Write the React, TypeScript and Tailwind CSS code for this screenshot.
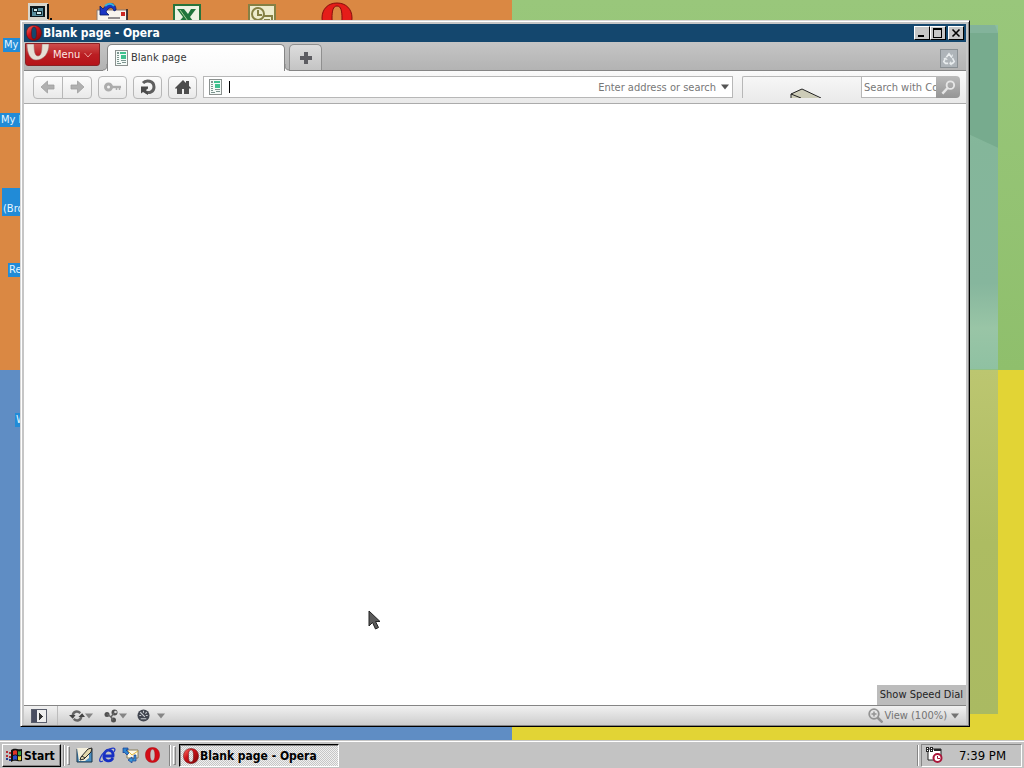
import type { ReactNode } from "react";

const ui = "font-['DejaVu_Sans_Condensed','DejaVu_Sans',sans-serif]";

function OperaIcon({ className }: { className: string }) {
  return (
    <svg viewBox="0 0 32 32" className={className} aria-hidden="true">
      <defs>
        <linearGradient id="operaRed" x1="0" y1="0" x2="1" y2="1">
          <stop offset="0" stopColor="#ff7a6c" />
          <stop offset="0.4" stopColor="#cf1219" />
          <stop offset="1" stopColor="#7a0508" />
        </linearGradient>
      </defs>
      <path
        fillRule="evenodd"
        fill="url(#operaRed)"
        stroke="#5e0a0c"
        strokeWidth="1"
        d="M16 1C7 1 1 7 1 16s6 15 15 15 15-6 15-15S25 1 16 1Zm0 3c4 0 5 5 5 12s-1 12-5 12-5-5-5-12 1-12 5-12Z"
      />
    </svg>
  );
}

function FlatOpera({ className }: { className: string }) {
  return (
    <svg viewBox="0 0 16 16" className={className} aria-hidden="true">
      <path fillRule="evenodd" fill="#d40d18" stroke="#a00810" strokeWidth=".5" d="M8 0C3 0 .5 3.500 .5 8S3 16 8 16s7.500-3.500 7.500-8S13 0 8 0Zm0 1.800c2 0 2.600 2.700 2.600 6.200S10 14.200 8 14.200 5.400 11.500 5.400 8 6 1.800 8 1.800Z" />
    </svg>
  );
}

function PageIcon() {
  return (
    <svg viewBox="0 0 13 16" className="h-4 w-[13px] shrink-0" shapeRendering="crispEdges" aria-hidden="true">
      <rect x=".5" y=".5" width="12" height="15" fill="#f4faf7" stroke="#8b918f" />
      <path fill="#3fc08f" d="M5 2h6v2H5zM6 5h5v4H6z" />
      <path fill="#7d9590" d="M2 2h2v2H2zM2 5h2v1H2zM2 7h2v1H2zM2 9h2v1H2zM6 10h5v1H6zM2 11h2v1H2zM2 13h4v1H2zM7 12h4v1H7z" />
    </svg>
  );
}

function Caret({ className = "" }: { className?: string }) {
  return (
    <svg viewBox="0 0 8 6" className={`h-[6px] w-2 ${className}`} aria-hidden="true">
      <path d="M0 .5h8L4 5.500Z" fill="currentColor" />
    </svg>
  );
}

function WindowButton({ label, children }: { label: string; children: ReactNode }) {
  return (
    <button
      aria-label={label}
      className="flex h-[14px] w-4 items-center justify-center border border-t-white border-r-black border-b-black border-l-white bg-[#c6c6c6] text-black"
    >
      <svg viewBox="0 0 12 10" className="h-[10px] w-3 shrink-0" shapeRendering="crispEdges" fill="none" stroke="currentColor" aria-hidden="true">
        {children}
      </svg>
    </button>
  );
}

function ToolButton({ label, className = "", children }: { label: string; className?: string; children: ReactNode }) {
  return (
    <button
      aria-label={label}
      className={`flex h-[23px] items-center justify-center border border-[#b7b7b7] bg-linear-to-b from-[#fcfcfc] to-[#e9e9e9] ${className}`}
    >
      {children}
    </button>
  );
}

function ArrowIcon({ flip = false }: { flip?: boolean }) {
  return (
    <svg viewBox="0 0 16 14" className={`h-[14px] w-4 ${flip ? "rotate-180" : ""}`} aria-hidden="true">
      <path d="M1 7 7.500 1v4H14v4H7.500v4Z" fill="#b0b0b0" stroke="#a0a0a0" strokeWidth=".8" />
    </svg>
  );
}

function Label({ text, className }: { text: string; className: string }) {
  return (
    <span className={`absolute flex w-16 items-end bg-[#218bd7] px-px text-[11px] leading-[14px] text-[#e6f6ff] ${className}`}>
      {text}
    </span>
  );
}

function Desktop() {
  return (
    <>
      <div className="grid h-full grid-cols-2 grid-rows-2" aria-hidden="true">
        <div className="bg-[#da8843]" />
        <div className="bg-linear-to-b from-[#99c77b] to-[#8fbf6c]" />
        <div className="bg-[#5f8dc4]" />
        <div className="bg-[#e2d435]" />
      </div>
      <div className="absolute top-[25px] right-[26px] bottom-[26px] flex w-10 flex-col" aria-hidden="true">
        <svg viewBox="0 0 40 345" preserveAspectRatio="none" className="w-full flex-1">
          <defs>
            <linearGradient id="glass" x1="0" y1="0" x2="0" y2="1">
              <stop offset="0" stopColor="#8cbf9f" />
              <stop offset="0.35" stopColor="#84b69a" />
              <stop offset="0.75" stopColor="#86b69d" />
              <stop offset="0.88" stopColor="#99c5a6" />
              <stop offset="1" stopColor="#8fc1a2" />
            </linearGradient>
          </defs>
          <path d="M0 0h40v345H0Z" fill="url(#glass)" />
          <path d="M0 8h40v115L12 110H0Z" fill="#77ab8e" />
          <path d="M0 0h37l3 8H0Z" fill="#83b39b" />
        </svg>
        <div className="flex-1 bg-linear-to-b from-[#bcc670] via-[#adbc62] to-[#aaba62]" />
      </div>
      <Label text="My" className="top-[38px] left-[3px]" />
      <Label text="My I" className="top-[113px] left-0" />
      <Label text="(Bro" className="top-[188px] left-[2px] h-7" />
      <Label text="Re" className="top-[263px] left-2" />
      <Label text="W" className="top-[413px] left-[15px]" />

      <svg viewBox="0 0 32 32" className="absolute top-0 left-[22px] size-8" shapeRendering="crispEdges" aria-hidden="true">
        <path d="M6 3h20v18H6z" fill="#d8d6cc" />
        <path d="M25 4h2v15h-2zM28 18h2v2h-2z" fill="#111" />
        <path d="M8 6h15v11H8z" fill="#0c171c" />
        <path d="M10 8h11v8H10z" fill="#598f9e" />
        <path d="M11 8h5v4h-5zM14 11h6v4h-6z" fill="#10242b" />
        <path d="M12 9h3v2h-3zM15 12h4v2h-4z" fill="#d7f0f0" />
      </svg>
      <svg viewBox="0 0 32 32" className="absolute top-0 left-24 size-8" aria-hidden="true">
        <path d="M1 10h30v14H1z" fill="#f8f5ee" stroke="#8b7a70" />
        <path d="M31 9v15" stroke="#1c1820" strokeWidth="1.500" />
        <path d="M25 12h4v4h-4z" fill="#cb2823" />
        <path d="M12 18h12" stroke="#2c2830" />
        <path d="M4 6v9h9l-3-3c2-5 7-6 8-1l2-1c0-8-8-9-13-1Z" fill="#1a35c4" stroke="#091d65" strokeWidth=".8" />
        <path d="M9 6c3-3 7-3 9 0" stroke="#37b2da" fill="none" strokeWidth="2" />
      </svg>
      <svg viewBox="0 0 32 32" className="absolute top-1 left-[171px] size-8" aria-hidden="true">
        <path d="M3 1h26v24H3z" fill="#edf3e3" stroke="#28743b" strokeWidth="2" />
        <path d="M6 5h7l4 5 3-5h5l-6 8 6 8h-7l-4-5-4 5H5l7-8Z" fill="#1f743b" />
        <path d="m9 6 10 14" stroke="#a7d091" />
      </svg>
      <svg viewBox="0 0 32 32" className="absolute top-1 left-[246px] size-8" fill="none" stroke="#858044" strokeWidth="2" aria-hidden="true">
        <path d="M3 1h26v24H3z" fill="#eeeccd" />
        <circle cx="12" cy="10" r="6" />
        <path d="M12 6v5h4M18 12h8v7h-3v-3h-5" />
      </svg>
      <svg viewBox="0 0 32 32" className="absolute top-[2px] left-[321px] size-8" aria-hidden="true">
        <path fillRule="evenodd" fill="#e51d19" stroke="#850d0c" d="M16 1C7 1 1 7 1 16s6 15 15 15 15-6 15-15S25 1 16 1Zm0 3c4 0 5 5 5 12s-1 12-5 12-5-5-5-12 1-12 5-12Z" />
      </svg>
    </>
  );
}

function TitleBar() {
  return (
    <header className="flex h-[18px] shrink-0 items-center bg-[#14476e] pr-[2px] pl-[2px]">
      <OperaIcon className="size-4 shrink-0" />
      <h1 className="ml-px flex-1 pt-px text-[12px] leading-[17px] font-bold text-white">Blank page - Opera</h1>
      <div className="flex">
        <WindowButton label="Minimize">
          <path d="M2 8h6" strokeWidth="2" />
        </WindowButton>
        <WindowButton label="Maximize">
          <path d="M1 1h9" strokeWidth="2" />
          <path d="M1.500 1v8.500h8V1" />
        </WindowButton>
        <span className="w-[2px]" />
        <WindowButton label="Close">
          <path d="m2.500 1.500 7 7m0-7-7 7" strokeWidth="1.600" shapeRendering="auto" />
        </WindowButton>
      </div>
    </header>
  );
}

function TabFlare({ flip = false }: { flip?: boolean }) {
  return (
    <svg viewBox="0 0 4 27" className={`mt-[2px] -mb-px h-[27px] w-1 shrink-0 ${flip ? "-scale-x-100" : ""}`} aria-hidden="true">
      <path d="M4 20c0 4-1 6-4 6v1h4Z" fill="#fafafa" />
      <path d="M4 20c0 4-1 6-4 6" fill="none" stroke="#858585" />
    </svg>
  );
}

function TabBar() {
  return (
    <div className="flex h-[29px] shrink-0 items-start border-b border-[#858585] bg-linear-to-b from-[#c5c5c5] to-[#b3b3b3]">
      <button className="mt-px ml-px flex h-[23px] w-[75px] shrink-0 items-center overflow-hidden rounded-b-[3px] border border-[#8a2023] bg-linear-to-b from-[#cf4c4c] via-[#bb1e23] to-[#b51319] text-[11px] text-[#ffe9e5]">
        <svg viewBox="0 0 25 22" className="h-[22px] w-[25px] shrink-0" aria-hidden="true">
          <path d="M1 0c0 9 3 16 9 16 8 0 13-7 13-16h-7c0 8-1 12-4 12S8 8 8 0Z" fill="#e6dfd5" stroke="#9b686a" strokeWidth=".5" />
        </svg>
        <span className="ml-[2px] pt-px">Menu</span>
        <svg viewBox="0 0 8 6" className="ml-1 h-[6px] w-2" fill="none" stroke="#e9a19b" aria-hidden="true">
          <path d="m.5 1 3.500 4 3.500-4" />
        </svg>
      </button>
      <span className="w-[3px] shrink-0" />
      <TabFlare />
      <div className="mt-[2px] -mb-px flex h-[27px] w-[178px] shrink-0 items-center gap-[3px] rounded-t-[5px] border border-b-0 border-[#858585] bg-linear-to-b from-white to-[#fafafa] pl-[7px] text-[11px] text-[#363636]">
        <PageIcon />
        <span className="pt-px">Blank page</span>
      </div>
      <TabFlare flip />
      <button aria-label="New tab" className="mt-[2px] flex h-[26px] w-[33px] shrink-0 items-center justify-center rounded-t-[5px] border border-b-0 border-[#8f8f8f] bg-linear-to-b from-[#dddddd] to-[#c4c4c4]">
        <svg viewBox="0 0 12 12" className="size-3" aria-hidden="true">
          <path d="M4 0h4v4h4v4H8v4H4V8H0V4h4Z" fill="#5d5d62" />
        </svg>
      </button>
      <button aria-label="Closed tabs" className="mt-[7px] mr-2 ml-auto flex h-[19px] w-[18px] shrink-0 items-center justify-center border border-[#8a9094] bg-[#aeb4b9]">
        <svg viewBox="0 0 16 16" className="size-[14px]" fill="none" stroke="#e9edef" strokeWidth="1.800" aria-hidden="true">
          <path d="m5 6 3-4 3 4M12 7l2 4-2 2H9M7 13H4l-2-2 2-4" />
          <path d="m9 4 2 2 1-3M10 11l-1 2 2 2M2 8l2-1 2 2" strokeWidth="1.200" />
        </svg>
      </button>
    </div>
  );
}

function ToolBar() {
  return (
    <div className="flex h-[33px] shrink-0 items-center border-b border-[#ababab] bg-linear-to-b from-[#fafafa] to-[#e9e9e9] pr-[6px] pl-[9px] text-[11px]">
      <div className="flex shrink-0">
        <ToolButton label="Back" className="w-[30px] rounded-l-[4px]"><ArrowIcon /></ToolButton>
        <ToolButton label="Forward" className="-ml-px w-[30px] rounded-r-[4px]"><ArrowIcon flip /></ToolButton>
      </div>
      <div className="ml-[6px] flex shrink-0 gap-[6px]">
        <ToolButton label="Passwords" className="w-[29px] rounded-[4px]">
          <svg viewBox="0 0 18 10" className="h-[10px] w-[18px]" fill="none" stroke="#adadad" aria-hidden="true">
            <circle cx="4.500" cy="5" r="3" strokeWidth="3" />
            <path d="M7 5h10" strokeWidth="2.400" />
            <path d="M12.500 5v3M15.500 5v3" strokeWidth="1.500" />
          </svg>
        </ToolButton>
        <ToolButton label="Reload" className="w-[29px] rounded-[4px]">
          <svg viewBox="0 0 16 16" className="size-4" aria-hidden="true">
            <path d="M3 4C6 .5 14 1.500 14 8c0 5-5 6.500-8 5" fill="none" stroke="#5e5e5e" strokeWidth="3" />
            <path d="M1 7.500h7v2l-2 1.500 2 3v2l-5-3-2 1.500Z" fill="#4a4a4a" />
          </svg>
        </ToolButton>
        <ToolButton label="Home" className="w-[29px] rounded-[4px]">
          <svg viewBox="0 0 16 16" className="size-4" fill="#4d4d4d" aria-hidden="true">
            <path d="M0 9 8 1l3 3V2h3v5l2 2-1 1-1-1v6H9v-5H7v5H2V9l-1 1Z" />
          </svg>
        </ToolButton>
      </div>
      <div className="ml-[6px] flex h-[22px] min-w-0 flex-1 items-center border border-[#b7b7b7] bg-white pr-[3px] pl-[5px] text-[#777]">
        <PageIcon />
        <span className="ml-[7px] h-3 w-px shrink-0 bg-black" />
        <input
          aria-label="Address"
          placeholder="Enter address or search"
          className="h-full min-w-0 flex-1 bg-transparent pt-px text-right outline-none placeholder:text-[#777]"
        />
        <button aria-label="Address history" className="ml-[5px] text-[#555]"><Caret /></button>
      </div>
      <div className="ml-[9px] flex h-[22px] w-[119px] shrink-0 items-end justify-center rounded-tl-[2px] border-t border-l border-[#b7b7b7] pl-2">
        <svg viewBox="0 0 32 12" className="h-3 w-8" fill="none" stroke="#222" aria-hidden="true">
          <path d="M1 12V8l10-5 10 4 8 5" fill="#cdccb8" stroke="none" />
          <path d="M1 12V8l11-5 19 9M1 8l10 4" />
        </svg>
      </div>
      <div className="flex h-[22px] w-[99px] shrink-0">
        <input
          aria-label="Search"
          placeholder="Search with Co"
          className="min-w-0 flex-1 border border-r-0 border-[#b7b7b7] bg-white pt-[2px] pl-[2px] outline-none placeholder:text-[#777]"
        />
        <button aria-label="Search the web" className="flex w-6 items-center justify-center rounded-r-[4px] bg-linear-to-b from-[#bababa] to-[#959595]">
          <svg viewBox="0 0 16 16" className="size-[15px]" fill="none" stroke="#e6e6e6" strokeWidth="2" aria-hidden="true">
            <circle cx="10" cy="5.500" r="4" />
            <path d="m7 8.500-5.500 6" strokeWidth="2.600" />
          </svg>
        </button>
      </div>
    </div>
  );
}

function StatusBar() {
  return (
    <footer className="flex h-5 shrink-0 items-center border-t border-[#858585] bg-linear-to-b from-[#f1f1f1] to-[#cdcdcd] pr-[7px] pl-[7px] text-[11px] text-[#737373]">
      <button aria-label="Panels">
        <svg viewBox="0 0 16 14" className="h-[14px] w-4" shapeRendering="crispEdges" aria-hidden="true">
          <path d="M.5.5h15v13H.5z" fill="#eee" stroke="#595d6b" />
          <path d="M1 1h5v12H1z" fill="#494d60" />
          <path d="M8 4v7l4-3.500Z" fill="#333" />
        </svg>
      </button>
      <span className="ml-[10px] h-full w-px bg-[#bcbcbc]" />
      <button aria-label="Synchronize" className="ml-[11px] flex items-center text-[#858585]">
        <svg viewBox="0 0 17 14" className="h-[14px] w-4" aria-hidden="true">
          <path d="M4 7C4 2 9 1 12 4M13 7c0 5-5 6-8 3" fill="none" stroke="#666" strokeWidth="2.600" />
          <path d="M0 6h7l-3 4ZM10 8h7l-3-4Z" fill="#444" />
        </svg>
        <Caret />
      </button>
      <button aria-label="Unite" className="ml-[11px] flex items-center gap-px text-[#858585]">
        <svg viewBox="0 0 14 14" className="size-[14px]" fill="#505050" aria-hidden="true">
          <circle cx="3" cy="5.500" r="2.500" /><circle cx="10.500" cy="3.500" r="3" /><circle cx="9.500" cy="11" r="2.500" />
          <circle cx="11.500" cy="3" r="1.300" fill="#d9d9d9" />
          <path d="m3 5 4 3 3-4M7 8l2 3" stroke="#666" strokeWidth="1.500" fill="none" />
        </svg>
        <Caret />
      </button>
      <button aria-label="Turbo" className="ml-[10px] flex items-center gap-[7px] text-[#858585]">
        <svg viewBox="0 0 14 14" className="size-[13px]" aria-hidden="true">
          <circle cx="7" cy="7" r="6.500" fill="#424650" />
          <path d="M7 2v2M2.500 7h2M9.500 7h2M3.500 3.500l5 5M10.500 3.500 9 5M4 10.500h6" stroke="#c8cbd0" strokeWidth="1.200" />
        </svg>
        <Caret />
      </button>
      <button className="ml-auto flex items-center">
        <svg viewBox="0 0 15 15" className="size-[15px]" fill="none" stroke="#939393" strokeWidth="1.800" aria-hidden="true">
          <circle cx="6" cy="6" r="4.800" />
          <path d="M3.500 6h5M6 3.500v5" strokeWidth="1.500" /><path d="m9.500 9.500 5 5" strokeWidth="2.500" />
        </svg>
        <span className="ml-px pt-[2px]">View (100%)</span>
        <Caret className="ml-1" />
      </button>
    </footer>
  );
}

function Grip() {
  return <span className="h-[19px] w-[3px] shrink-0 border border-t-white border-r-[#858585] border-b-[#858585] border-l-white" />;
}

function Divider() {
  return <span className="h-[21px] w-[2px] shrink-0 border-r border-l border-r-white border-l-[#858585]" />;
}

function TaskBar() {
  return (
    <nav aria-label="Taskbar" className="flex h-7 shrink-0 items-center border-t border-[#c6c6c6] bg-[#c3c3c3] pt-px pr-[2px] pl-[2px] text-[12px] text-black shadow-[inset_0_1px_0_#fff]">
      <button className="flex h-[23px] w-[59px] shrink-0 items-center gap-px border border-t-white border-r-black border-b-black border-l-white pl-[3px] font-bold shadow-[inset_-1px_-1px_0_#858585]">
        <svg viewBox="0 0 17 16" className="h-4 w-[17px] shrink-0" aria-hidden="true">
          <path d="M5 3c4-3 6 0 11-1v12c-5 1-7-2-11 1Z" fill="#111" />
          <path d="M7 4c2-1 3-1 4 0v4c-2-1-3 0-4 0Z" fill="#e03327" />
          <path d="M12 4c1 1 2 0 3 0v4c-1 1-2 0-3 0Z" fill="#35a044" />
          <path d="M7 9c2-1 3-1 4 0v4c-2-1-3 0-4 0Z" fill="#284ac8" />
          <path d="M12 9c1 1 2 0 3 0v4c-1 1-2 0-3 0Z" fill="#e6cf31" />
          <path d="M0 4h2v2H0zM3 5h2v2H3zM0 8h2v2H0zM3 9h2v2H3z" fill="#b42e35" />
          <path d="M0 11h2v2H0zM3 12h2v2H3z" fill="#263e91" />
        </svg>
        <span className="pt-px">Start</span>
      </button>
      <div className="ml-[2px] flex shrink-0 items-center gap-[2px]"><Divider /><Grip /></div>
      <div className="ml-[6px] flex shrink-0 items-center gap-[6px]">
        <button aria-label="Show desktop">
          <svg viewBox="0 0 17 16" className="h-4 w-[17px]" aria-hidden="true">
            <path d="M1 2h15v13H1z" fill="#4b8ec2" stroke="#183449" />
            <path d="M1 1h12v10l-4 3H3Z" fill="#f4efdc" />
            <path d="m5 10 7-8 4-1-1 4-7 7-4 1Z" fill="#e5d9ae" stroke="#272727" />
            <path d="m6 9 3 2" stroke="#272727" />
          </svg>
        </button>
        <button aria-label="Internet Explorer">
          <svg viewBox="0 0 17 16" className="h-4 w-[17px]" fill="none" aria-hidden="true">
            <path d="M14 11c-3 5-10 3-9-3 1-7 10-6 9 1H6" stroke="#162fc3" strokeWidth="2.800" />
            <path d="M4 14C-2 17 1 8 7 4s11-4 8 1" stroke="#253cc5" strokeWidth="1.300" />
          </svg>
        </button>
        <button aria-label="Outlook Express">
          <svg viewBox="0 0 17 16" className="h-4 w-[17px]" aria-hidden="true">
            <path d="M5 3h11v8H5z" fill="#fff9e4" stroke="#867c59" />
            <path d="m6 4 4 4 6-4" fill="none" stroke="#d9b43c" />
            <path d="M1 1h5v2H4l3 3-2 2-3-3-1 1Z" fill="#2c85d2" stroke="#153a91" strokeWidth=".7" />
            <path d="M14 8v6h-4v2l-4-3 4-3v2h2V8Z" fill="#3a97d7" stroke="#153a91" strokeWidth=".7" />
          </svg>
        </button>
        <button aria-label="Opera"><FlatOpera className="h-4 w-[15px]" /></button>
      </div>
      <div className="ml-[9px] flex shrink-0 items-center gap-[2px]"><Divider /><Grip /></div>
      <button className="ml-[3px] flex h-[23px] w-[160px] shrink-0 items-center border border-t-black border-r-white border-b-white border-l-black bg-[repeating-conic-gradient(#c6c6c6_0_25%,#f0f0f0_0_50%)] bg-size-[2px_2px] pt-px pl-[3px] font-bold whitespace-nowrap shadow-[inset_1px_1px_0_#858585]">
        <OperaIcon className="size-4 shrink-0" />
        <span className="ml-px pt-px">Blank page - Opera</span>
      </button>
      <div className="ml-auto flex shrink-0 items-center gap-[2px]">
        <Divider />
        <div className="flex h-[23px] w-[101px] items-center border border-t-[#858585] border-r-white border-b-white border-l-[#858585] pl-1">
          <svg viewBox="0 0 17 16" className="h-4 w-[17px]" aria-hidden="true">
            <path d="M2 2h13v11H2z" fill="#fff" stroke="#222" />
            <path d="M0 0h3v5H0zM4 0h3v5H4zM8 2h7v2H8z" fill="#272727" />
            <path d="M1 1h1v1H1zM1 3h1v1H1zM5 1h1v1H5zM5 3h1v1H5z" fill="#fff" />
            <circle cx="11.500" cy="11" r="4" fill="#fff" stroke="#a91539" strokeWidth="2" />
            <path d="M11.500 9v2.500H14" fill="none" stroke="#a91539" />
          </svg>
          <time className="mt-[2px] mr-[15px] ml-auto text-[13px]">7:39 PM</time>
        </div>
      </div>
    </nav>
  );
}

export default function App() {
  return (
    <div className={`flex h-screen flex-col overflow-hidden ${ui}`}>
      <main className="relative min-h-0 flex-1 overflow-hidden">
        <Desktop />
        <section
          aria-label="Blank page - Opera"
          className="absolute top-5 right-[54px] bottom-[13px] left-5 flex flex-col border border-t-[#d8d8d8] border-r-black border-b-black border-l-[#d8d8d8] bg-[#c6c6c6] pt-[3px] pr-[3px] pb-px pl-[3px] shadow-[inset_1px_1px_0_#fff,inset_-1px_-1px_0_#858585]"
        >
          <TitleBar />
          <TabBar />
          <ToolBar />
          <div className="flex min-h-0 flex-1 items-end justify-end bg-white">
            <button className="h-5 bg-[#bcbcbc] px-[3px] text-[11px] leading-5 whitespace-nowrap text-[#1f1f1f]">Show Speed Dial</button>
          </div>
          <StatusBar />
        </section>
        <svg viewBox="0 0 12 20" className="absolute top-[610px] left-[368px] h-5 w-3" aria-hidden="true">
          <path d="M1 1v15l3.500-3.500L7.500 19l3-1.500-3-6H12Z" fill="#5a5a5a" stroke="#222" strokeWidth="1" />
        </svg>
      </main>
      <TaskBar />
    </div>
  );
}
